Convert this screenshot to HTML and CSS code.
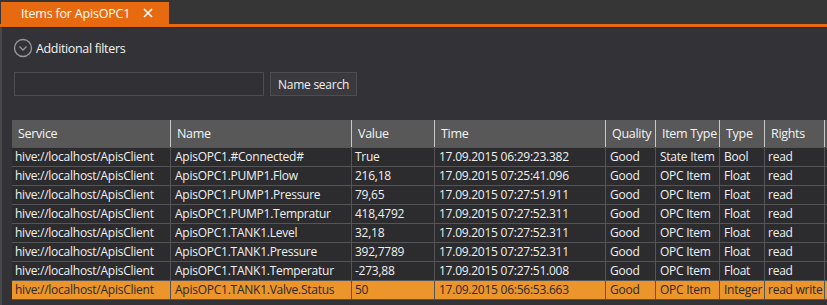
FILE: index.html
```html
<!DOCTYPE html>
<html>
<head>
<meta charset="utf-8">
<link rel="stylesheet" href="styles.css">
</head>
<body>
<div class="app">
  <div class="tabbar">
    <div class="tab">
      <span class="tab-title">Items for ApisOPC1</span>
      <svg class="tab-close" width="10" height="10" viewBox="0 0 10 10"><path d="M1 1 L9 9 M9 1 L1 9" stroke="#fff" stroke-width="1.6" fill="none"/></svg>
    </div>
  </div>
  <div class="content">
    <div class="filters">
      <svg class="chev" width="20" height="20" viewBox="0 0 20 20"><circle cx="10" cy="10" r="8.5" stroke="#9a9a9a" stroke-width="1.3" fill="none"/><path d="M6.5 8.5 L10 12 L13.5 8.5" stroke="#9a9a9a" stroke-width="1.3" fill="none"/></svg>
      <span>Additional filters</span>
    </div>
    <div class="search">
      <input class="search-input" type="text">
      <button class="search-btn">Name search</button>
    </div>
    <div class="grid">
      <div class="row head">
        <div class="c c1">Service</div><div class="c c2">Name</div><div class="c c3">Value</div><div class="c c4">Time</div><div class="c c5">Quality</div><div class="c c6">Item Type</div><div class="c c7">Type</div><div class="c c8">Rights</div>
      </div>
      <div class="row"><div class="c c1">hive://localhost/ApisClient</div><div class="c c2">ApisOPC1.#Connected#</div><div class="c c3">True</div><div class="c c4">17.09.2015 06:29:23.382</div><div class="c c5">Good</div><div class="c c6">State Item</div><div class="c c7">Bool</div><div class="c c8">read</div></div>
      <div class="row"><div class="c c1">hive://localhost/ApisClient</div><div class="c c2">ApisOPC1.PUMP1.Flow</div><div class="c c3">216,18</div><div class="c c4">17.09.2015 07:25:41.096</div><div class="c c5">Good</div><div class="c c6">OPC Item</div><div class="c c7">Float</div><div class="c c8">read</div></div>
      <div class="row"><div class="c c1">hive://localhost/ApisClient</div><div class="c c2">ApisOPC1.PUMP1.Pressure</div><div class="c c3">79,65</div><div class="c c4">17.09.2015 07:27:51.911</div><div class="c c5">Good</div><div class="c c6">OPC Item</div><div class="c c7">Float</div><div class="c c8">read</div></div>
      <div class="row"><div class="c c1">hive://localhost/ApisClient</div><div class="c c2">ApisOPC1.PUMP1.Tempratur</div><div class="c c3">418,4792</div><div class="c c4">17.09.2015 07:27:52.311</div><div class="c c5">Good</div><div class="c c6">OPC Item</div><div class="c c7">Float</div><div class="c c8">read</div></div>
      <div class="row"><div class="c c1">hive://localhost/ApisClient</div><div class="c c2">ApisOPC1.TANK1.Level</div><div class="c c3">32,18</div><div class="c c4">17.09.2015 07:27:52.311</div><div class="c c5">Good</div><div class="c c6">OPC Item</div><div class="c c7">Float</div><div class="c c8">read</div></div>
      <div class="row"><div class="c c1">hive://localhost/ApisClient</div><div class="c c2">ApisOPC1.TANK1.Pressure</div><div class="c c3">392,7789</div><div class="c c4">17.09.2015 07:27:52.311</div><div class="c c5">Good</div><div class="c c6">OPC Item</div><div class="c c7">Float</div><div class="c c8">read</div></div>
      <div class="row"><div class="c c1">hive://localhost/ApisClient</div><div class="c c2">ApisOPC1.TANK1.Temperatur</div><div class="c c3">-273,88</div><div class="c c4">17.09.2015 07:27:51.008</div><div class="c c5">Good</div><div class="c c6">OPC Item</div><div class="c c7">Float</div><div class="c c8">read</div></div>
      <div class="row sel"><div class="c c1">hive://localhost/ApisClient</div><div class="c c2">ApisOPC1.TANK1.Valve.Status</div><div class="c c3">50</div><div class="c c4">17.09.2015 06:56:53.663</div><div class="c c5">Good</div><div class="c c6">OPC Item</div><div class="c c7">Integer</div><div class="c c8">read write</div></div>
    </div>
  </div>
</div>
</body>
</html>
```
FILE: styles.css
```css
* { box-sizing: border-box; }
html, body { margin: 0; padding: 0; }
body {
  width: 827px; height: 305px; overflow: hidden;
  background: #333337;
  font-family: "Open Sans", "Noto Sans", sans-serif;
  color: #f0f0f0;
}
.app { display: flex; flex-direction: column; height: 305px; }
.tabbar {
  height: 27px; background: #363636;
  border-bottom: 3px solid #e86a10;
  display: flex; align-items: flex-end; padding: 2px 0 0 1px;
}
.tab {
  width: 168px; height: 22px; background: #e86a10;
  display: flex; align-items: center;
  font-size: 12.5px; letter-spacing: -0.2px; color: #fff;
}
.tab-title { margin-left: 20px; width: 122px; }
.content {
  flex: 1; border-top: 1px solid #2a2a2c; border-left: 2px solid #48484a;
  padding: 0 0 0 10px;
}
.filters {
  display: flex; align-items: center; gap: 3px;
  margin-top: 10px; margin-left: 1px; height: 20px;
  font-size: 12.5px; letter-spacing: -0.35px; color: #f2f2f2;
}
.search { display: flex; gap: 6px; margin-top: 14px; margin-left: 2px; }
.search-input {
  width: 250px; height: 24px; background: #313135;
  border: 1px solid #4e4e52; outline: none; margin: 0;
}
.search-btn {
  width: 87px; height: 24px; background: #3a3a3e; color: #f0f0f0;
  border: 1px solid #4e4e52; font-family: inherit; font-size: 12px; letter-spacing: -0.25px; margin: 0; padding: 0;
}
.grid { margin-top: 24px; }
.row { display: flex; height: 19px; background: #2c2c2f; border-bottom: 1px solid #555558; }
.row .c {
  font-size: 12px; letter-spacing: -0.25px; line-height: 18px; padding-left: 3px; white-space: nowrap; overflow: hidden;
  border-right: 1px solid #555558;
}
.row .c2, .row .c4, .row .c5, .row .c6, .row .c7 { padding-left: 4px; }
.row.head { height: 28px; background: #585858; border-bottom: 1px solid #555; }
.row.head .c { line-height: 28px; padding-left: 6px; border-right: 1px solid #c8c8c8; font-size: 12.5px; letter-spacing: -0.3px; color: #f4f4f4; }
.row.sel { background: #ec952b; }
.row.sel .c { color: #2a2a2a; }
.c1 { width: 159px; }
.c2 { width: 181px; }
.c3 { width: 83px; }
.c4 { width: 171px; }
.c5 { width: 50px; }
.c6 { width: 64px; }
.c7 { width: 45px; }
.c8 { width: 60px; }
```
